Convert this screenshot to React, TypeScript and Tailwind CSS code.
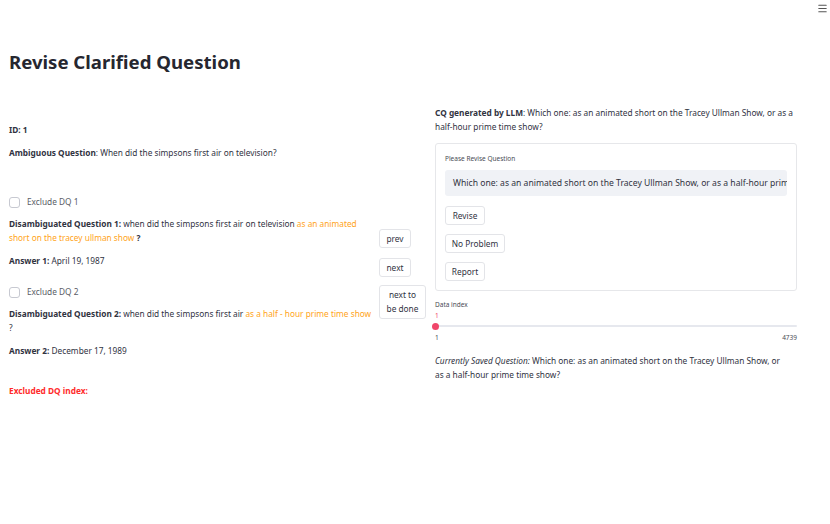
import { Menu } from "lucide-react";

const font = { fontFamily: '"Noto Sans", "Liberation Sans", sans-serif' };

function Checkbox({ label }: { label: string }) {
  return (
    <label className="flex items-center h-[14px] gap-[7px]">
      <span className="w-[11px] h-[11px] rounded-[3px] border border-[#c7c9d1] bg-white" />
      <span className="text-[#5a5c66]">{label}</span>
    </label>
  );
}

function Btn({ children, className = "" }: { children: React.ReactNode; className?: string }) {
  return (
    <button
      className={
        "rounded-[3px] border border-[#e3e4e8] bg-white text-[#31333f] text-[8.3px] leading-[14px] " +
        className
      }
    >
      {children}
    </button>
  );
}

export default function App() {
  return (
    <div className="w-[830px] h-[524px] bg-white text-[#31333f] relative overflow-hidden" style={font}>
      <Menu size={11} className="absolute top-[3px] right-[2px] text-[#555]" strokeWidth={2.5} />

      <div className="pl-[9px] pr-[33px]">
        <h1 className="pt-[48px] text-[18.6px] leading-[28px] font-bold text-[#262730]">
          Revise Clarified Question
        </h1>

        <div className="flex mt-[30px] text-[8.3px] leading-[14px]">
          {/* left column */}
          <div className="w-[370px] pr-[6px] flex flex-col">
            <div className="mt-[17px] font-bold">ID: 1</div>
            <div className="mt-[9px]">
              <b>Ambiguous Question</b>: When did the simpsons first air on television?
            </div>
            <div className="mt-[35px]">
              <Checkbox label="Exclude DQ 1" />
            </div>
            <div className="mt-[8px] pr-[4px]">
              <b>Disambiguated Question 1:</b> when did the simpsons first air on television{" "}
              <span className="text-[#ffa421]">as an animated short on the tracey ullman show</span> <b>?</b>
            </div>
            <div className="mt-[9px]">
              <b>Answer 1:</b> April 19, 1987
            </div>
            <div className="mt-[17px]">
              <Checkbox label="Exclude DQ 2" />
            </div>
            <div className="mt-[8px]">
              <b>Disambiguated Question 2:</b> when did the simpsons first air{" "}
              <span className="text-[#ffa421]">as a half - hour prime time show</span>
              <br />?
            </div>
            <div className="mt-[9px]">
              <b>Answer 2:</b> December 17, 1989
            </div>
            <div className="mt-[26px] font-bold text-[#ff2b2b]">Excluded DQ index:</div>
          </div>

          {/* buttons column */}
          <div className="w-[56px] flex flex-col items-start">
            <Btn className="mt-[123px] w-[32px] h-[19px]">prev</Btn>
            <Btn className="mt-[10px] w-[32px] h-[19px]">next</Btn>
            <Btn className="mt-[8px] w-[47px] h-[34px] leading-[14px]">
              next to
              <br />
              be done
            </Btn>
          </div>

          {/* right column */}
          <div className="w-[362px] flex flex-col">
            <div>
              <b>CQ generated by LLM</b>: Which one: as an animated short on the Tracey Ullman Show, or as a
              half-hour prime time show?
            </div>
            <div className="mt-[9px] border border-[#e6e7ea] rounded-[3px] px-[9px] pt-[10px] pb-[9px] flex flex-col items-start">
              <div className="text-[6.5px] leading-[10px] text-[#4a4c55]">Please Revise Question</div>
              <div className="mt-[6px] w-full h-[26px] bg-[#f0f2f6] rounded-[3px] px-[8px] flex items-center overflow-hidden whitespace-nowrap text-[8.6px]">
                Which one: as an animated short on the Tracey Ullman Show, or as a half-hour prime time show?
              </div>
              <Btn className="mt-[10px] w-[40px] h-[19px]">Revise</Btn>
              <Btn className="mt-[9px] w-[60px] h-[19px]">No Problem</Btn>
              <Btn className="mt-[9px] w-[40px] h-[19px]">Report</Btn>
            </div>
            <div className="mt-[9px] text-[6.5px] leading-[10px] text-[#4a4c55]">Data index</div>
            <div className="text-[6.5px] leading-[10px] text-[#f0466a] mt-[1px]">1</div>
            <div className="relative h-[8px] mt-[1px] flex items-center">
              <div className="w-full h-[2px] bg-[#e6e8ee] rounded" />
              <div className="absolute left-[-3px] top-[0.5px] w-[7px] h-[7px] rounded-full bg-[#f0466a]" />
            </div>
            <div className="flex justify-between text-[6.5px] leading-[10px] text-[#4a4c55] mt-[3px]">
              <span>1</span>
              <span>4739</span>
            </div>
            <div className="mt-[11px]">
              <i>Currently Saved Question:</i> Which one: as an animated short on the Tracey Ullman Show, or
              <br />
              as a half-hour prime time show?
            </div>
          </div>
        </div>
      </div>
    </div>
  );
}
